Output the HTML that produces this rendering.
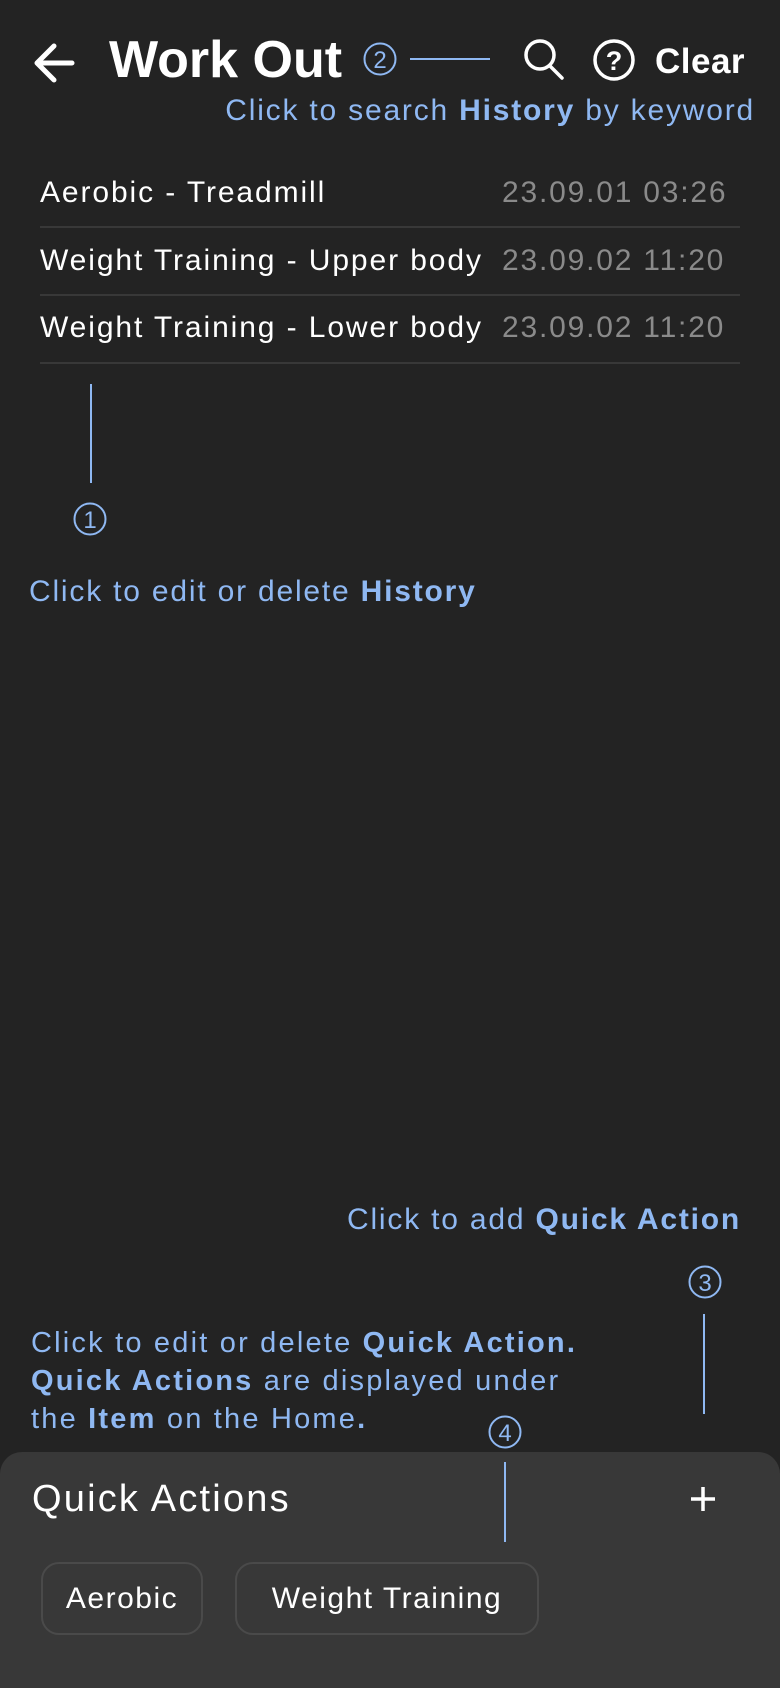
<!DOCTYPE html>
<html><head><meta charset="utf-8"><style>
*{margin:0;padding:0;box-sizing:border-box}
body{width:780px;height:1688px;background:#232323;position:relative;overflow:hidden;font-family:"Liberation Sans",sans-serif;color:#fff}
.a{position:absolute;white-space:nowrap}
.b{color:#8fb8f2;letter-spacing:1.8px}
.b b{font-weight:700}
.row{position:absolute;left:40px;width:700px;font-size:30px;line-height:36px;letter-spacing:1.9px}
.row .d{position:absolute;left:462px;top:0;color:#8a8a8a;letter-spacing:1.8px}
.hr{position:absolute;left:40px;width:700px;height:2px;background:#383838}
.vl{position:absolute;width:2px;background:#8fb8f2}
.chip{position:absolute;top:1562px;height:73px;border:2px solid #4a4a4a;border-radius:18px;font-size:30px;line-height:69px;text-align:center;color:#fff;letter-spacing:1.5px}
</style></head><body>
<svg class="a" style="left:0;top:0" width="780" height="1688">
<path d="M72 63 H38 M54 46 L37 63 L54 80" stroke="#fff" stroke-width="5" fill="none" stroke-linecap="round" stroke-linejoin="round"/>
<circle cx="380" cy="59" r="15.5" stroke="#8fb8f2" stroke-width="2" fill="none"/>
<text x="380" y="68" text-anchor="middle" fill="#8fb8f2" font-size="24" font-family="Liberation Sans">2</text>
<line x1="410" y1="59" x2="490" y2="59" stroke="#8fb8f2" stroke-width="2"/>
<circle cx="540" cy="55" r="14" stroke="#fff" stroke-width="3.5" fill="none"/>
<line x1="550" y1="66" x2="562" y2="78" stroke="#fff" stroke-width="3.5" stroke-linecap="round"/>
<circle cx="614" cy="60" r="19" stroke="#fff" stroke-width="3.5" fill="none"/>
<text x="614" y="70" text-anchor="middle" fill="#fff" font-size="27" font-weight="700" font-family="Liberation Sans">?</text>
<circle cx="90" cy="519" r="15.5" stroke="#8fb8f2" stroke-width="2" fill="none"/>
<text x="90" y="528" text-anchor="middle" fill="#8fb8f2" font-size="24" font-family="Liberation Sans">1</text>
<circle cx="705" cy="1282" r="15.5" stroke="#8fb8f2" stroke-width="2" fill="none"/>
<text x="705" y="1291" text-anchor="middle" fill="#8fb8f2" font-size="24" font-family="Liberation Sans">3</text>
</svg>
<div class="a" style="left:109px;top:30px;font-size:52px;font-weight:700;line-height:60px">Work Out</div>
<div class="a" style="left:655px;top:42px;font-size:35px;font-weight:700;line-height:40px;letter-spacing:0.5px">Clear</div>
<div class="a b" style="right:25px;top:93px;font-size:30px;line-height:36px">Click to search <b>History</b> by keyword</div>

<div class="row" style="top:175px">Aerobic - Treadmill<span class="d">23.09.01 03:26</span></div>
<div class="hr" style="top:226px"></div>
<div class="row" style="top:243px">Weight Training - Upper body<span class="d">23.09.02 11:20</span></div>
<div class="hr" style="top:294px"></div>
<div class="row" style="top:310px">Weight Training - Lower body<span class="d">23.09.02 11:20</span></div>
<div class="hr" style="top:362px"></div>

<div class="vl" style="left:90px;top:384px;height:99px"></div>
<div class="a b" style="left:29px;top:574px;font-size:30px;line-height:36px">Click to edit or delete <b>History</b></div>

<div class="a b" style="right:39px;top:1202px;font-size:30px;line-height:36px">Click to add <b>Quick Action</b></div>
<div class="vl" style="left:703px;top:1314px;height:100px"></div>
<div class="a b" style="left:31px;top:1324px;font-size:29px;line-height:38px;letter-spacing:2.2px">Click to edit or delete <b>Quick Action.</b><br><b>Quick Actions</b> are displayed under<br>the <b>Item</b> on the Home<b>.</b></div>

<div class="a" style="left:0;top:1452px;width:780px;height:236px;background:#383838;border-radius:22px 22px 0 0"></div>
<svg class="a" style="left:0;top:1400px" width="780" height="160">
<circle cx="505" cy="32" r="15.5" stroke="#8fb8f2" stroke-width="2" fill="none"/>
<text x="505" y="41" text-anchor="middle" fill="#8fb8f2" font-size="24" font-family="Liberation Sans">4</text>
<line x1="505" y1="62" x2="505" y2="142" stroke="#8fb8f2" stroke-width="2"/>
<path d="M703 87 V111 M691 99 H715" stroke="#fff" stroke-width="3.5"/>
</svg>
<div class="a" style="left:32px;top:1477px;font-size:38px;line-height:44px;letter-spacing:2.2px">Quick Actions</div>
<div class="chip" style="left:41px;width:162px">Aerobic</div>
<div class="chip" style="left:235px;width:304px">Weight Training</div>
</body></html>
